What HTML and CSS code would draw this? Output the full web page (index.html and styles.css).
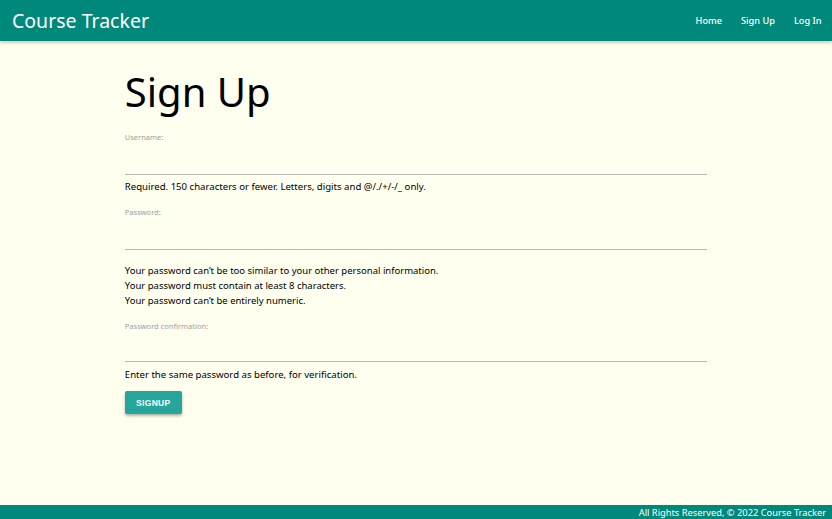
FILE: index.html
```html
<!DOCTYPE html>
<html lang="en">
<head>
<meta charset="utf-8">
<title>Course Tracker - Sign Up</title>
<link rel="stylesheet" href="styles.css">
</head>
<body>
<nav class="nav">
  <a class="brand" href="#">Course Tracker</a>
  <ul class="links">
    <li><a href="#">Home</a></li>
    <li><a href="#">Sign Up</a></li>
    <li><a href="#">Log In</a></li>
  </ul>
</nav>
<main class="container">
  <h1 class="title">Sign Up</h1>
  <form class="form">
    <div class="field">
      <label class="label">Username:</label>
      <input class="input" type="text">
      <p class="help">Required. 150 characters or fewer. Letters, digits and @/./+/-/_ only.</p>
    </div>
    <div class="field">
      <label class="label">Password:</label>
      <input class="input" type="password">
      <ul class="help-list">
        <li>Your password can’t be too similar to your other personal information.</li>
        <li>Your password must contain at least 8 characters.</li>
        <li>Your password can’t be entirely numeric.</li>
      </ul>
    </div>
    <div class="field">
      <label class="label">Password confirmation:</label>
      <input class="input input-short" type="password">
      <p class="help help-last">Enter the same password as before, for verification.</p>
    </div>
    <button class="btn" type="button">SIGNUP</button>
  </form>
</main>
<footer class="footer">All Rights Reserved, © 2022 Course Tracker</footer>
</body>
</html>
```
FILE: styles.css
```css
* { box-sizing: border-box; }
html, body { margin: 0; padding: 0; }
body {
  min-height: 100vh;
  display: flex;
  flex-direction: column;
  background: #fffff0;
  font-family: "Noto Sans", "DejaVu Sans", sans-serif;
  color: #000;
}
.nav {
  height: 41px;
  background: #00897b;
  display: flex;
  align-items: center;
  justify-content: space-between;
  padding: 0 0 0 12px;
  box-shadow: 0 2px 3px rgba(0,0,0,0.2);
}
.brand {
  color: #fff;
  text-decoration: none;
  font-size: 19.5px;
  line-height: 41px;
}
.links {
  list-style: none;
  display: flex;
  margin: 0;
  padding: 0 1px 0 0;
}
.links a {
  display: block;
  color: #fff;
  text-decoration: none;
  font-size: 9.2px;
  font-weight: 500;
  padding: 0 9.5px;
  line-height: 41px;
}
.container {
  flex: 1;
  width: 70%;
  margin: 0 auto;
}
.title {
  font-size: 40px;
  font-weight: 400;
  margin: 0;
  padding-top: 27px;
  line-height: 48px;
}
.field { margin-top: 12px; }
.title + .form .field:first-child { margin-top: 15px; }
.label {
  display: block;
  font-size: 7.5px;
  color: #9e9e9e;
  line-height: 12px;
}
.input {
  display: block;
  width: 100%;
  height: 32px;
  border: none;
  border-bottom: 1px solid #b8b8b8;
  background: transparent;
  margin: 0;
  outline: none;
}
.input-short { height: 30px; }
.help {
  margin: 4px 0 0;
  font-size: 9.6px;
  line-height: 15px;
}
.help-last { margin-top: 5px; }
.help-list {
  list-style: none;
  padding: 0;
  margin: 13px 0 0;
  font-size: 9.5px;
  line-height: 15px;
}
.btn {
  margin-top: 9px;
  height: 23px;
  width: 57px;
  border: none;
  border-radius: 2px;
  background: #26a69a;
  color: #fff;
  font-family: "Liberation Sans", Arial, sans-serif;
  font-weight: 700;
  font-size: 8.5px;
  letter-spacing: 0.3px;
  box-shadow: 0 2px 3px rgba(0,0,0,0.3);
}
.footer {
  height: 14px;
  background: #00897b;
  color: #fff;
  text-align: right;
  font-size: 9.3px;
  line-height: 15px;
  padding-right: 6px;
}
```
